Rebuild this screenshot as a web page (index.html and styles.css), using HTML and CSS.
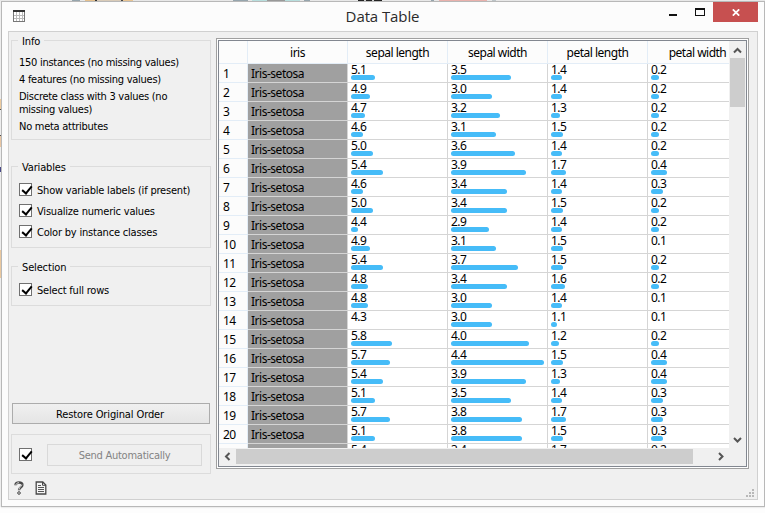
FILE: index.html
```html
<!DOCTYPE html>
<html lang="en">
<head>
<meta charset="utf-8">
<title>Data Table</title>
<link rel="stylesheet" href="styles.css">
</head>
<body>
<div class="desk-top"></div>
<div class="desk-left"></div>
<div class="window">
  <header class="titlebar">
    <svg class="app-icon" width="12" height="12" viewBox="0 0 12 12" shape-rendering="crispEdges"><path fill="#fff" d="M0 0h12v12H0z"/><path fill="#bbb" d="M3 2h1v9H3zM6 2h1v9H6zM9 2h1v9H9zM1 5h10v1H1zM1 8h10v1H1z"/><path fill="#777" d="M0 2h1v10H0zM11 2h1v10h-1zM0 11h12v1H0z"/><path fill="#333" d="M0 0h12v2H0z"/></svg>
    <h1 class="title">Data Table</h1>
    <div class="controls">
      <svg class="min" width="8" height="2"><path fill="#111" d="M0 0h8v2H0z"/></svg>
      <svg class="max" width="10" height="8" shape-rendering="crispEdges"><path fill="#111" fill-rule="evenodd" d="M0 0h10v8H0zM1 2h8v5H1z"/></svg>
      <div class="close"><svg width="8" height="7" viewBox="0 0 8 7"><path d="M.8.3 7.2 6.7M7.2.3.8 6.7" stroke="#fff" stroke-width="1.7"/></svg></div>
    </div>
  </header>
  <main class="client">
    <aside class="side">
      <section class="group info">
        <h2 class="legend">Info</h2>
        <p>150 instances (no missing values)</p>
        <p>4 features (no missing values)</p>
        <p>Discrete class with 3 values (no<br>missing values)</p>
        <p>No meta attributes</p>
      </section>
      <section class="group variables">
        <h2 class="legend">Variables</h2>
        <div class="check"><span class="box"></span><span class="label">Show variable labels (if present)</span></div>
        <div class="check"><span class="box"></span><span class="label">Visualize numeric values</span></div>
        <div class="check"><span class="box"></span><span class="label">Color by instance classes</span></div>
      </section>
      <section class="group selection">
        <h2 class="legend">Selection</h2>
        <div class="check"><span class="box"></span><span class="label">Select full rows</span></div>
      </section>
      <div class="spacer"></div>
      <button class="restore"><span>Restore Original Order</span></button>
      <section class="group send">
        <span class="box"></span>
        <button class="auto" disabled><span>Send Automatically</span></button>
      </section>
      <footer class="status">
        <svg width="10" height="14" viewBox="0 0 10 14"><path d="M1.500 4.200C1.500 2.200 3 1.500 5 1.500s3.400.800 3.400 2.500C8.400 6.300 5 6.300 5 9.300" fill="none" stroke="#484848" stroke-width="2.400"/><path d="M1.800 4C2.300 2.300 3.500 1.700 5 1.700M7.900 3.500C7.900 5.600 5 6 5 8.600" fill="none" stroke="#e4e4e4" stroke-width=".9"/><circle cx="5" cy="12" r="1.300" fill="#eee" stroke="#444"/></svg>
        <svg width="12" height="14" viewBox="0 0 12 14"><path d="M1.200 1h6.600l3 3v9H1.200z" fill="#f4f4f4" stroke="#484848" stroke-width="1.300"/><path d="M7.500 1v3.300h3.300" fill="none" stroke="#484848"/><path d="M3 4.500h3M3 6.500h6M3 8.500h6M3 10.500h6" stroke="#555"/></svg>
      </footer>
    </aside>
    <div class="frame">
      <div class="inner">
        <div class="view">
          <div class="row head"><span></span><span><b>iris</b></span><span><b>sepal length</b></span><span><b>sepal width</b></span><span><b>petal length</b></span><span><b>petal width</b></span></div>
          <div id="rows"></div>
        </div>
        <div class="vbar">
          <svg width="15" height="16"><path d="M4 11.500 7.500 8l3.500 3.500" fill="none" stroke="#555" stroke-width="2"/></svg>
          <div class="vthumb"></div>
          <svg class="end" width="15" height="18"><path d="M4 7 7.500 10.500 11 7" fill="none" stroke="#555" stroke-width="2"/></svg>
        </div>
        <div class="hbar">
          <svg width="17" height="15"><path d="M10.500 4 7 7.500l3.500 3.500" fill="none" stroke="#555" stroke-width="2"/></svg>
          <div class="hthumb"></div>
          <svg class="right" width="17" height="15"><path d="M5 4l3.500 3.500L5 11" fill="none" stroke="#555" stroke-width="2"/></svg>
        </div>
      </div>
    </div>
    <svg class="grip" width="8" height="8" shape-rendering="crispEdges"><path fill="#b8b8b8" d="M6 0h2v2H6zM3 3h2v2H3zM6 3h2v2H6zM0 6h2v2H0zM3 6h2v2H3zM6 6h2v2H6z"/></svg>
  </main>
</div>
<script src="table.js"></script>
</body>
</html>
```
FILE: styles.css
```css
* { box-sizing: border-box; }
body { margin: 0; width: 765px; height: 513px; overflow: hidden; position: relative; background: #fdfdfd; font: 11px/13px "DejaVu Sans Condensed", "DejaVu Sans", sans-serif; color: #000; }
h1, h2, p { margin: 0; font-weight: normal; }
svg { display: block; flex: none; }
.desk-top { position: absolute; left: 0; top: 0; width: 765px; height: 1px; background: linear-gradient(90deg, #e8e8e8 72px, #96a5ad 72px 80px, #e8e8e8 80px 85px, #e5c08d 85px 95px, #333 95px 97px, #d9cbb8 97px 121px, #444 121px 123px, #e8c493 123px 133px, #e8e8e8 133px 233px, #96a5ad 233px 248px, #e8e8e8 248px 252px, #b7dedd 252px 267px, #999 267px 285px, #b7dedd 285px 300px, #e8e8e8 300px 304px, #96a5ad 304px 310px, #e8e8e8 310px 358px, #222 358px 364px, #ccc 364px 366px, #222 366px 372px, #ccc 372px 374px, #222 374px 382px, #e8e8e8 382px 431px, #96a5ad 431px 434px, #e8e8e8 434px 439px, #e9b1ac 439px 487px, #e8e8e8 487px 492px, #bcc4c8 492px 496px, #e8e8e8 496px); }
.desk-left { position: absolute; left: 0; top: 1px; width: 1px; height: 506px; background: linear-gradient(#eee 98px, #edc490 98px 108px, #333 108px 109px, #eee 109px 134px, #333 134px 135px, #e9bf95 135px 146px, #eee 146px 166px, #282875 166px 171px, #eee 171px 249px, #eac18f 249px 277px, #eee 277px); }
.window { margin-left: 1px; position: relative; top: 1px; width: 764px; height: 506px; border: 1px solid #b8b8b8; background: #fcfcfc; padding: 0 6px; box-shadow: 0 1px 1px #ededed; }
.titlebar { height: 29px; display: flex; justify-content: center; position: relative; }
.app-icon { position: absolute; left: 5px; top: 8px; }
.title { font: 15px/20px "Open Sans", sans-serif; color: #2b2b2b; padding-top: 4px; margin-right: 1px; letter-spacing: -.1px; white-space: nowrap; }
.controls { position: absolute; right: 0; top: 0; display: flex; height: 20px; }
.min { margin: 12px 18px 0 0; }
.max { margin: 6px 8px 0 0; }
.close { width: 45px; height: 20px; background: #c75050; display: flex; align-items: center; justify-content: center; }
.client { position: relative; width: 750px; height: 469px; border: 1px solid #d0d0d0; background: #f0f0f0; display: flex; }
.side { width: 207px; padding: 8px 0 0 2px; display: flex; flex-direction: column; flex: none; }
.group { width: 200px; border: 1px solid #dcdcdc; position: relative; padding-left: 7px; flex: none; }
.legend { position: absolute; left: 6px; top: -6px; padding: 0 4px; background: #f0f0f0; font-size: 11px; line-height: 13px; letter-spacing: -.15px; white-space: nowrap; }
.group p { white-space: nowrap; margin-bottom: 4px; letter-spacing: -.27px; }
.info { height: 100px; padding-top: 15px; }
.variables { height: 82px; margin-top: 26px; padding-top: 16px; }
.selection { height: 40px; margin-top: 18px; padding-top: 16px; }
.check { display: flex; height: 13px; margin-bottom: 8px; gap: 5px; white-space: nowrap; }
.label { padding-top: 1px; letter-spacing: -.2px; }
.box { width: 13px; height: 13px; border: 1px solid #707070; background: #fff; flex: none; position: relative; }
.box::after { content: ""; position: absolute; left: 4px; top: 0; width: 4px; height: 8px; border: solid #000; border-width: 0 2px 2px 0; transform: rotate(40deg); }
.spacer { flex: 1; }
button { font: inherit; padding: 0; display: flex; align-items: center; justify-content: center; border-radius: 0; white-space: nowrap; }
.restore { width: 198px; height: 21px; margin-left: 1px; padding: 1px 2px 0 0; border: 1px solid #acacac; background: linear-gradient(#f0f0f0, #e5e5e5); color: #000; letter-spacing: -.12px; flex: none; }
.send { height: 40px; margin-top: 10px; display: flex; align-items: center; gap: 15px; }
.auto { width: 155px; height: 22px; border: 1px solid #d9d9d9; background: #efefef; color: #838383; margin-top: 2px; letter-spacing: -.25px; }
.status { height: 25px; padding: 7px 0 0 3px; display: flex; gap: 11px; }
.frame { width: 533px; height: 431px; margin-top: 6px; border: 1px solid #a0a0a0; padding: 1px; background: #fff; }
.inner { width: 529px; height: 427px; border: 1px solid #828790; display: grid; grid-template: 408px 17px / 511px 16px; background: #f0f0f0; }
.view { width: 510px; height: 407px; overflow: hidden; background: #fff; font: 12px/17px "Noto Sans", sans-serif; }
.row { width: 529px; display: grid; grid-template-columns: 29px repeat(5, 100px); height: 19px; }
.row > span { border-right: 1px solid #d5d5d5; border-bottom: 1px solid #d5d5d5; white-space: nowrap; padding-left: 3px; }
.row .num { border-color: #e3edf7; background: #fcfcfc; padding-left: 4px; padding-top: 1px; letter-spacing: -.5px; }
.row .cls { background: #a0a0a0; padding-top: 1px; letter-spacing: -.48px; }
.row .val { line-height: 12px; letter-spacing: -.5px; }
.bar { display: block; height: 5px; border-radius: 2.5px; background: #46bcf8; margin-top: -1px; }
.head { height: 23px; }
.row.head > span { border-color: #e3edf7; background: #fcfcfc; padding: 3px 0 0; text-align: center; }
.head b { font-weight: normal; letter-spacing: -.5px; }
.vbar { width: 15px; display: flex; flex-direction: column; }
.vthumb { height: 49px; background: #cdcdcd; margin-top: 1px; flex: none; }
.vbar .end { margin-top: auto; }
.hbar { height: 15px; grid-column: 1 / 3; display: flex; }
.hthumb { width: 457px; background: #cdcdcd; flex: none; }
.hbar .right { margin-left: 21px; }
.grip { position: absolute; right: 3px; bottom: 2px; }
```
FILE: table.js
```javascript
const data = [
  [5.1, 3.5, 1.4, 0.2], [4.9, 3.0, 1.4, 0.2], [4.7, 3.2, 1.3, 0.2], [4.6, 3.1, 1.5, 0.2],
  [5.0, 3.6, 1.4, 0.2], [5.4, 3.9, 1.7, 0.4], [4.6, 3.4, 1.4, 0.3], [5.0, 3.4, 1.5, 0.2],
  [4.4, 2.9, 1.4, 0.2], [4.9, 3.1, 1.5, 0.1], [5.4, 3.7, 1.5, 0.2], [4.8, 3.4, 1.6, 0.2],
  [4.8, 3.0, 1.4, 0.1], [4.3, 3.0, 1.1, 0.1], [5.8, 4.0, 1.2, 0.2], [5.7, 4.4, 1.5, 0.4],
  [5.4, 3.9, 1.3, 0.4], [5.1, 3.5, 1.4, 0.3], [5.7, 3.8, 1.7, 0.3], [5.1, 3.8, 1.5, 0.3],
  [5.4, 3.4, 1.7, 0.2]
];
const ranges = [[4.3, 7.9], [2.0, 4.4], [1.0, 6.9], [0.1, 2.5]];

// Bars run from the column minimum; a value at the minimum has none.
function cell(value, column) {
  const [min, max] = ranges[column];
  const width = value > min ? 4.6 + (value - min) / (max - min) * 88.4 : 0;
  return `<span class="val">${value.toFixed(1)}<i class="bar" style="width:${width.toFixed(1)}px"></i></span>`;
}

document.getElementById("rows").innerHTML = data.map((values, i) =>
  `<div class="row"><span class="num">${i < 20 ? i + 1 : ""}</span><span class="cls">${i < 20 ? "Iris-setosa" : ""}</span>${values.map(cell).join("")}</div>`
).join("");
```
